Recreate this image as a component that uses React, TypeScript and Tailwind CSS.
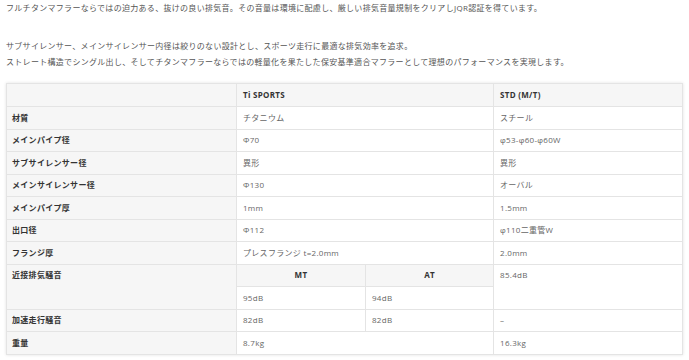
export default function App() {
  const rows = [
    { label: "材質", ti: "チタニウム", std: "スチール" },
    { label: "メインパイプ径", ti: "Φ70", std: "φ53-φ60-φ60W" },
    { label: "サブサイレンサー径", ti: "異形", std: "異形" },
    { label: "メインサイレンサー径", ti: "Φ130", std: "オーバル" },
    { label: "メインパイプ厚", ti: "1mm", std: "1.5mm" },
    { label: "出口径", ti: "Φ112", std: "φ110二重管W" },
    { label: "フランジ厚", ti: "プレスフランジ t=2.0mm", std: "2.0mm" },
  ];

  const label = "bg-[#f6f6f6] border border-[#e4e4e4] pl-[5px] font-bold text-[#333] align-middle";
  const cell = "border border-[#e4e4e4] pl-[6px] text-[#666] align-middle";

  return (
    <div
      className="min-h-screen bg-white px-[6px] text-[8px] tracking-[0.3px]"
      style={{ fontFamily: '"Open Sans", "Noto Sans CJK JP", sans-serif' }}
    >
      <p className="leading-[15px] text-[#555] mb-[23px]">
        フルチタンマフラーならではの迫力ある、抜けの良い排気音。その音量は環境に配慮し、厳しい排気音量規制をクリアしJQR認証を得ています。
      </p>
      <p className="leading-[16px] text-[#555] mb-[13px]">
        サブサイレンサー、メインサイレンサー内径は絞りのない設計とし、スポーツ走行に最適な排気効率を追求。
        <br />
        ストレート構造でシングル出し、そしてチタンマフラーならではの軽量化を果たした保安基準適合マフラーとして理想のパフォーマンスを実現します。
      </p>

      <table className="w-[676px] border-collapse table-fixed shadow-[0_0_3px_rgba(0,0,0,0.12)]">
        <colgroup>
          <col className="w-[230px]" />
          <col className="w-[129px]" />
          <col className="w-[128px]" />
          <col className="w-[189px]" />
        </colgroup>
        <tbody>
          <tr className="h-[23px]">
            <td className="bg-[#f6f6f6] border border-[#e4e4e4]"></td>
            <td colSpan={2} className={`${label} pl-[6px]`}>Ti SPORTS</td>
            <td className={`${label} pl-[6px]`}>STD (M/T)</td>
          </tr>
          {rows.map((r) => (
            <tr key={r.label} className="h-[22.5px]">
              <td className={label}>{r.label}</td>
              <td colSpan={2} className={cell}>{r.ti}</td>
              <td className={cell}>{r.std}</td>
            </tr>
          ))}
          <tr className="h-[22.5px]">
            <td rowSpan={2} className={`${label} align-top pt-[4px]`}>近接排気騒音</td>
            <td className="bg-[#f6f6f6] border border-[#e4e4e4] text-center font-bold text-[#333]">MT</td>
            <td className="bg-[#f6f6f6] border border-[#e4e4e4] text-center font-bold text-[#333]">AT</td>
            <td rowSpan={2} className={`${cell} align-top pt-[4px]`}>85.4dB</td>
          </tr>
          <tr className="h-[22.5px]">
            <td className={cell}>95dB</td>
            <td className={cell}>94dB</td>
          </tr>
          <tr className="h-[22.5px]">
            <td className={label}>加速走行騒音</td>
            <td className={cell}>82dB</td>
            <td className={cell}>82dB</td>
            <td className={cell}>–</td>
          </tr>
          <tr className="h-[22.5px]">
            <td className={label}>重量</td>
            <td colSpan={2} className={cell}>8.7kg</td>
            <td className={cell}>16.3kg</td>
          </tr>
        </tbody>
      </table>
    </div>
  );
}
